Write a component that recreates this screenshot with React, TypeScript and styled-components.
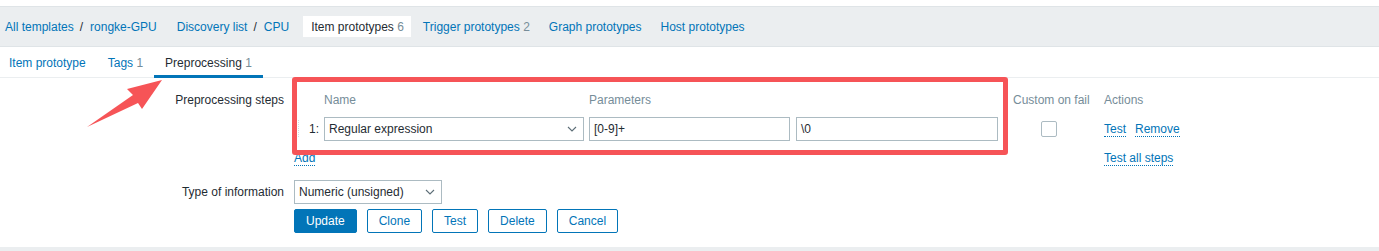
import React from "react";
import styled, { createGlobalStyle } from "styled-components";

const Global = createGlobalStyle`
  html, body { margin: 0; padding: 0; }
  body {
    background: #ebeef0;
    font-family: "Liberation Sans", Arial, sans-serif;
    font-size: 12px;
    color: #1f2c33;
  }
`;

const Page = styled.div`
  position: relative;
  background: #ffffff;
  padding-top: 6px;
`;

const Nav = styled.nav`
  display: flex;
  align-items: center;
  height: 39px;
  background: #ebeef0;
  border-top: 1px solid #dfe4e7;
  border-bottom: 1px solid #dfe4e7;
  padding-left: 5px;
  gap: 20px;
`;

const Crumbs = styled.div`
  display: flex;
  align-items: center;
`;

const Sep = styled.span`
  color: #1f2c33;
  margin: 0 7px 0 6px;
`;

const Link = styled.a`
  color: #0275b8;
  text-decoration: none;
  white-space: nowrap;
`;

const Count = styled.span`
  color: #768d99;
`;

const NavTabs = styled.div`
  display: flex;
  align-items: center;
  margin-left: -6px;
  gap: 4px;
`;

const NavTab = styled.a<{ $active?: boolean }>`
  display: flex;
  align-items: center;
  height: 21px;
  padding: 0 7px 0 8px;
  color: ${(p) => (p.$active ? "#1f2c33" : "#0275b8")};
  background: ${(p) => (p.$active ? "#ffffff" : "transparent")};
  text-decoration: none;
  white-space: nowrap;
`;

const TabRow = styled.div`
  display: flex;
  height: 30px;
  border-bottom: 1px solid #ebeef0;
  margin-left: -2px;
`;

const Tab = styled.a<{ $active?: boolean }>`
  display: flex;
  align-items: center;
  height: 31px;
  box-sizing: border-box;
  padding: 3px 11px 0;
  margin-bottom: -1px;
  color: ${(p) => (p.$active ? "#1f2c33" : "#0275b8")};
  border-bottom: 3px solid ${(p) => (p.$active ? "#0275b8" : "transparent")};
  text-decoration: none;
`;

const Form = styled.div`
  display: grid;
  grid-template-columns: 284px 1fr;
  column-gap: 10px;
  row-gap: 10px;
  padding: 10px 0 14px;
  background: #ffffff;
`;

const Label = styled.div`
  text-align: right;
  line-height: 24px;
  white-space: nowrap;
`;

const Field = styled.div`
  display: flex;
  flex-direction: column;
  gap: 5px;
`;

const Steps = styled.div`
  display: grid;
  grid-template-columns: 11px 19px 265px 207px 217px 91px auto;
  grid-auto-rows: 24px;
  row-gap: 5px;
  align-items: center;
`;

const Head = styled.div`
  color: #768d99;
  white-space: nowrap;
`;

const Handle = styled.div`
  width: 4px;
  height: 18px;
  margin-left: 2px;
  background-image: radial-gradient(circle at 0.5px 0.5px, #d3dbe0 0.7px, transparent 0.8px);
  background-size: 2px 2px;
`;

const Num = styled.div`
  text-align: right;
  padding-right: 5px;
`;

const Box = styled.div<{ $w: number }>`
  box-sizing: border-box;
  width: ${(p) => p.$w}px;
  height: 24px;
  border: 1px solid #acbbc2;
  background: #ffffff;
  display: flex;
  align-items: center;
  justify-content: space-between;
  padding: 0 6px 0 4px;
  color: #1f2c33;
  white-space: nowrap;
`;

const Check = styled.div`
  box-sizing: border-box;
  width: 16px;
  height: 16px;
  border: 1px solid #acbbc2;
  border-radius: 2px;
  background: #fff;
  margin-left: 28px;
`;

const Actions = styled.div`
  display: flex;
  gap: 9px;
`;

const DotLink = styled.a`
  color: #0275b8;
  text-decoration: none;
  border-bottom: 1px dotted #0275b8;
  line-height: 14px;
  white-space: nowrap;
  justify-self: start;
`;

const AddCell = styled.div`
  grid-column: 1 / 7;
  display: flex;
`;

const Buttons = styled.div`
  display: flex;
  gap: 10px;
`;

const Button = styled.button<{ $primary?: boolean }>`
  box-sizing: border-box;
  height: 24px;
  padding: 0 11px;
  font-family: inherit;
  font-size: 12px;
  border: 1px solid #0275b8;
  border-radius: 2px;
  background: ${(p) => (p.$primary ? "#0275b8" : "#ffffff")};
  color: ${(p) => (p.$primary ? "#ffffff" : "#0275b8")};
`;

const RedFrame = styled.div`
  position: absolute;
  left: 292px;
  top: 77px;
  width: 716px;
  height: 78px;
  box-sizing: border-box;
  border: 5px solid #f65457;
  border-radius: 3px;
  pointer-events: none;
`;

const ArrowSvg = styled.svg`
  position: absolute;
  left: 80px;
  top: 74px;
`;

const Chevron = () => (
  <svg width="10" height="6" viewBox="0 0 10 6">
    <path d="M1 1 L5 5 L9 1" fill="none" stroke="#5d6e77" strokeWidth="1.1" />
  </svg>
);

export default function App() {
  return (
    <>
      <Global />
      <Page>
        <Nav>
          <Crumbs>
            <Link>All templates</Link>
            <Sep>/</Sep>
            <Link>rongke-GPU</Link>
          </Crumbs>
          <Crumbs>
            <Link>Discovery list</Link>
            <Sep>/</Sep>
            <Link>CPU</Link>
          </Crumbs>
          <NavTabs>
            <NavTab $active>
              Item prototypes&nbsp;<Count>6</Count>
            </NavTab>
            <NavTab>
              Trigger prototypes&nbsp;<Count>2</Count>
            </NavTab>
            <NavTab>Graph prototypes</NavTab>
            <NavTab>Host prototypes</NavTab>
          </NavTabs>
        </Nav>
        <TabRow>
          <Tab>Item prototype</Tab>
          <Tab>
            Tags&nbsp;<Count>1</Count>
          </Tab>
          <Tab $active>
            Preprocessing&nbsp;<Count>1</Count>
          </Tab>
        </TabRow>
        <Form>
          <Label>Preprocessing steps</Label>
          <Steps>
            <div />
            <div />
            <Head>Name</Head>
            <Head>Parameters</Head>
            <div />
            <Head>Custom on fail</Head>
            <Head>Actions</Head>

            <Handle />
            <Num>1:</Num>
            <Box $w={260}>
              Regular expression
              <Chevron />
            </Box>
            <Box $w={201}>[0-9]+</Box>
            <Box $w={202}>\0</Box>
            <Check />
            <Actions>
              <DotLink>Test</DotLink>
              <DotLink>Remove</DotLink>
            </Actions>

            <AddCell>
              <DotLink>Add</DotLink>
            </AddCell>
            <DotLink>Test all steps</DotLink>
          </Steps>

          <Label>Type of information</Label>
          <Field>
            <Box $w={148}>
              Numeric (unsigned)
              <Chevron />
            </Box>
            <Buttons>
              <Button $primary>Update</Button>
              <Button>Clone</Button>
              <Button>Test</Button>
              <Button>Delete</Button>
              <Button>Cancel</Button>
            </Buttons>
          </Field>
        </Form>
        <RedFrame />
        <ArrowSvg width="90" height="60" viewBox="0 0 90 60">
          <polygon
            points="82,6 47,15 53,21 7,53 58,29 62,35"
            fill="#f65457"
          />
        </ArrowSvg>
      </Page>
    </>
  );
}
